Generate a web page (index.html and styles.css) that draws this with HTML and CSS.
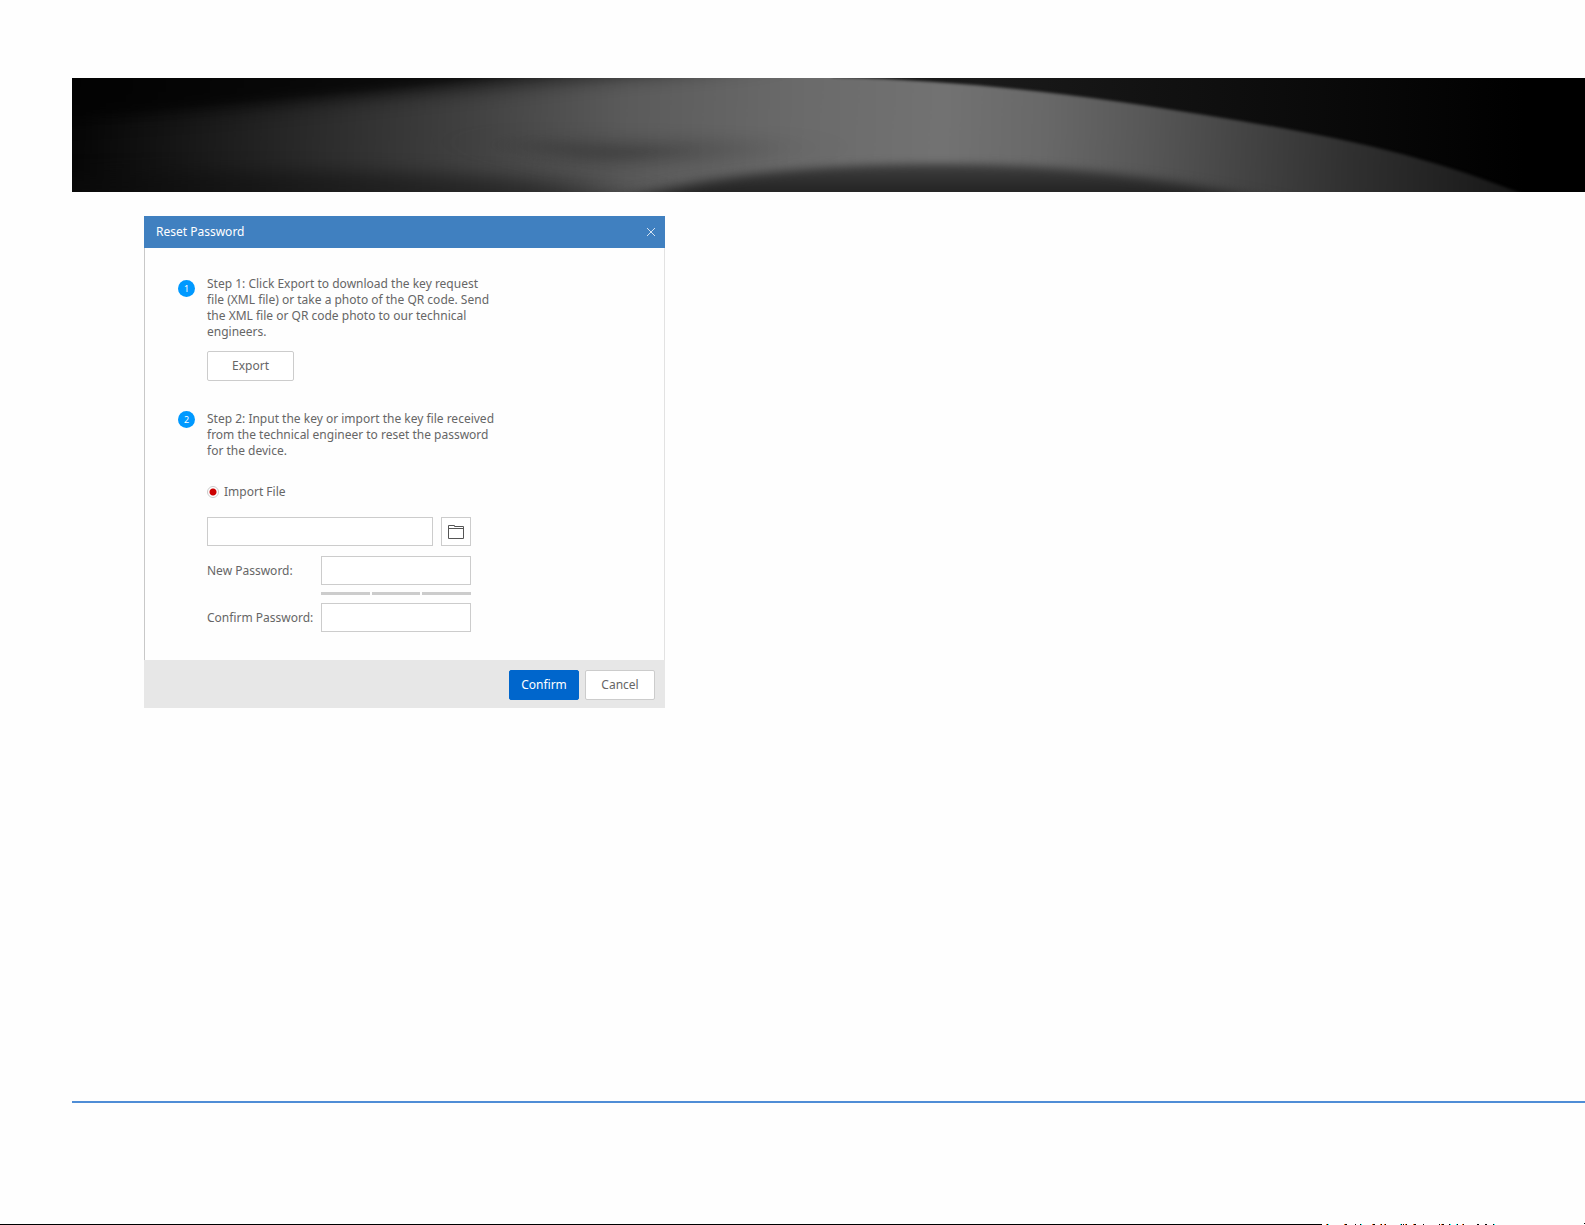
FILE: index.html
```html
<!DOCTYPE html>
<html lang="en">
<head>
  <meta charset="UTF-8" />
  <meta name="viewport" content="width=device-width, initial-scale=1.0"/>
  <title>Reset Password</title>
  <link rel="stylesheet" href="styles.css">
</head>
<body>

  <header class="banner">
    <svg viewBox="0 0 1513 114" preserveAspectRatio="none" color-interpolation-filters="sRGB" aria-hidden="true">
      <defs>
        <linearGradient id="night" x1="0" x2="1" y1="0" y2="0">
          <stop offset="0" stop-color="#000"/>
          <stop offset=".3" stop-color="#0a0a0a"/>
          <stop offset=".6" stop-color="#1a1a1a"/>
          <stop offset=".8" stop-color="#0c0c0c"/>
          <stop offset=".96" stop-color="#000"/>
        </linearGradient>
        <linearGradient id="glow" gradientUnits="userSpaceOnUse" x1="0" x2="1453" y1="0" y2="60">
          <stop offset="0" stop-color="#050505"/>
          <stop offset=".17" stop-color="#2b2b2b"/>
          <stop offset=".28" stop-color="#424242"/>
          <stop offset=".38" stop-color="#5a5a5a"/>
          <stop offset=".5" stop-color="#6a6a6a"/>
          <stop offset=".6" stop-color="#727272"/>
          <stop offset=".67" stop-color="#686868"/>
          <stop offset=".74" stop-color="#575757"/>
          <stop offset=".81" stop-color="#434343"/>
          <stop offset=".88" stop-color="#303030"/>
          <stop offset="1" stop-color="#161616"/>
        </linearGradient>
        <linearGradient id="floor" gradientUnits="userSpaceOnUse" x1="0" x2="0" y1="78" y2="114">
          <stop offset="0" stop-color="#484848"/>
          <stop offset="1" stop-color="#242424"/>
        </linearGradient>
        <filter id="soft1" x="-10%" y="-50%" width="120%" height="200%"><feGaussianBlur stdDeviation="1.5"/></filter>
        <filter id="soft4" x="-10%" y="-50%" width="120%" height="200%"><feGaussianBlur stdDeviation="20 4"/></filter>
        <filter id="soft8" x="-20%" y="-80%" width="140%" height="260%"><feGaussianBlur stdDeviation="40 9"/></filter>
      </defs>
      <rect width="1513" height="114" fill="url(#night)"/>
      <path d="M-20-10H760V-1C910 3 1030 20 1157 41S1361 80 1461 120L1440 130H-20Z" fill="url(#glow)" filter="url(#soft1)"/>
      <path d="M-80-40H700L640-8C520-2 440 8 345 16S130 38-80 46Z" fill="#040404" opacity=".6" filter="url(#soft8)"/>
      <path d="M-80-20H520C460-2 330 10 240 18S60 38-80 42Z" fill="#020202" opacity=".6" filter="url(#soft4)"/>
      <path d="M-80 170V100C100 90 340 90 500 104L680 170Z" fill="#0c0c0c" opacity=".5" filter="url(#soft8)"/>
      <path d="M420 60C520 62 640 62 720 68 660 78 580 86 530 90 500 84 460 72 420 60Z" fill="#333" opacity=".4" filter="url(#soft8)"/>
      <path d="M440 64C500 66 560 68 610 72 580 78 550 84 520 84Z" fill="#333" opacity=".3" filter="url(#soft4)"/>
      <path d="M540 128C610 100 720 86 866 86S1100 100 1260 136Z" fill="url(#floor)" filter="url(#soft4)"/>
    </svg>
  </header>

  <main class="content">
    <form class="dialog">
      <div class="dialog-header">
        <h1>Reset Password</h1>
        <button type="button" class="close" aria-label="Close">
          <svg width="10" height="10" viewBox="0 0 10 10"><path d="M1 1l8 8M9 1L1 9" stroke="#d5e3f1" fill="none"/></svg>
        </button>
      </div>

      <div class="dialog-body">
        <div class="step">
          <span class="badge">1</span>
          <div class="step-body">
            <p>Step 1: Click Export to download the key request<br>
              file (XML file) or take a photo of the QR code. Send<br>
              the XML file or QR code photo to our technical<br>
              engineers.</p>
            <button type="button" class="btn export">Export</button>
          </div>
        </div>

        <div class="step">
          <span class="badge top">2</span>
          <div class="step-body">
            <p>Step 2: Input the key or import the key file received<br>
              from the technical engineer to reset the password<br>
              for the device.</p>

            <label class="radio"><input type="radio" name="method" checked> Import File</label>

            <div class="file-row">
              <input type="text" aria-label="Key file">
              <button type="button" class="browse" aria-label="Browse">
                <svg width="16" height="14" viewBox="0 0 16 14"><path d="M.5 13.5V.5h6v1h9v12zM.5 3.5h15" stroke="#555" fill="none"/></svg>
              </button>
            </div>

            <div class="field">
              <label for="newPassword">New Password:</label>
              <input type="password" id="newPassword">
            </div>
            <div class="strength"><span></span><span></span><span></span></div>
            <div class="field">
              <label for="confirmPassword">Confirm Password:</label>
              <input type="password" id="confirmPassword">
            </div>
          </div>
        </div>
      </div>

      <div class="dialog-footer">
        <button type="submit" class="btn primary">Confirm</button>
        <button type="button" class="btn">Cancel</button>
      </div>
    </form>
  </main>

  <footer class="page-footer">
    <div class="edge">
      <svg width="263" height="2" viewBox="0 0 263 2" shape-rendering="crispEdges" aria-hidden="true">
        <path d="M5 1.5h1M23 1.5h2M33 1.5h1M38 1.5h1M51 1.5h2M59 1.5h1M63 1.5h1M79 1.5h1M81 1.5h1M84 1.5h1M92 1.5h2M101 1.5h1M117 1.5h1M120 1.5h2M127 1.5h1M135 1.5h1M141 1.5h1M155 1.5h2M163 1.5h2M171 1.5h1M262 .5h1" stroke="#000"/>
        <path d="M4 1.5h1M22 1.5h1M50 1.5h1M58 1.5h1M62 1.5h1M83 1.5h1M91 1.5h1M119 1.5h1M140 1.5h1" stroke="#f60"/>
        <path d="M6 1.5h1M39 1.5h1M78 1.5h1M128 1.5h1M134 1.5h1M172 1.5h1" stroke="#0ff"/>
      </svg>
    </div>
  </footer>

</body>
</html>
```

FILE: styles.css
```css
* { margin: 0; padding: 0; box-sizing: border-box; }
body { min-height: 100vh; display: flex; flex-direction: column; padding-top: 78px; background: #fefefe; color: #666; font-family: 'Noto Sans', 'Open Sans', sans-serif; font-size: 12px; line-height: 16px; }
input, button { font: inherit; color: inherit; }
button { cursor: pointer; }

.banner { height: 114px; margin-left: 72px; background: #000; }
.banner svg { display: block; width: 100%; height: 100%; }

.content { flex: 1; padding: 24px 24px 24px 144px; }

.dialog { max-width: 521px; background: #fefefe; }
.dialog-header { display: flex; justify-content: space-between; align-items: center; height: 32px; padding: 0 8px 0 12px; background: #4080c0; color: #fff; }
.dialog-header h1 { font-size: 12px; font-weight: normal; }
.close { display: flex; padding: 1px; border: none; background: none; }
.dialog-body { display: grid; gap: 30px; padding: 28px 32px 28px 33px; border-left: 1px solid #c8c8c8; border-right: 1px solid #e2e2e2; }
.dialog-footer { display: flex; justify-content: flex-end; align-items: center; gap: 6px; padding: 10px 10px 8px; background: #e7e7e7; }

.step { display: flex; align-items: flex-start; gap: 12px; }
.step-body { max-width: 298px; }
.badge { display: flex; justify-content: center; align-items: center; flex: none; width: 17px; height: 17px; margin-top: 4px; border-radius: 50%; background: #0099ff; color: #fff; font-size: 9px; }
.badge.top { margin-top: 0; }

.btn { width: 70px; height: 30px; border: 1px solid #ccc; border-radius: 2px; background: #fff; }
.btn.export { width: 87px; margin-top: 11px; }
.btn.primary { border-color: #0066cc; background: #0066cc; color: #fff; }

.radio { display: flex; align-items: center; gap: 5px; margin-top: 25px; }
.radio input { appearance: none; width: 12px; height: 12px; border: 1px solid #ccc; border-radius: 50%; background: radial-gradient(circle, #c00 3px, #fff 4px); }

.file-row { display: flex; justify-content: space-between; width: 264px; margin: 17px 0 10px; }
.file-row input { width: 226px; }
.browse { display: flex; justify-content: center; align-items: center; width: 30px; border: 1px solid #ccc; background: #fff; }
.field { display: flex; justify-content: space-between; align-items: center; width: 264px; }
.field input { width: 150px; }
.file-row input, .field input { height: 29px; padding: 0 6px; border: 1px solid #ccc; background: #fff; }
.strength { display: grid; grid-template-columns: repeat(3, 1fr); gap: 2px; width: 150px; margin: 7px 0 8px 114px; }
.strength span { height: 3px; background: #ccc; }

.page-footer { height: 124px; display: flex; flex-direction: column; justify-content: flex-end; margin-left: 72px; border-top: 2px solid #4f8dd6; }
.edge { display: flex; justify-content: flex-end; margin-left: -72px; background: linear-gradient(#000, #000) left bottom / calc(100% - 263px) 1px no-repeat; }
.edge svg { display: block; }
```
